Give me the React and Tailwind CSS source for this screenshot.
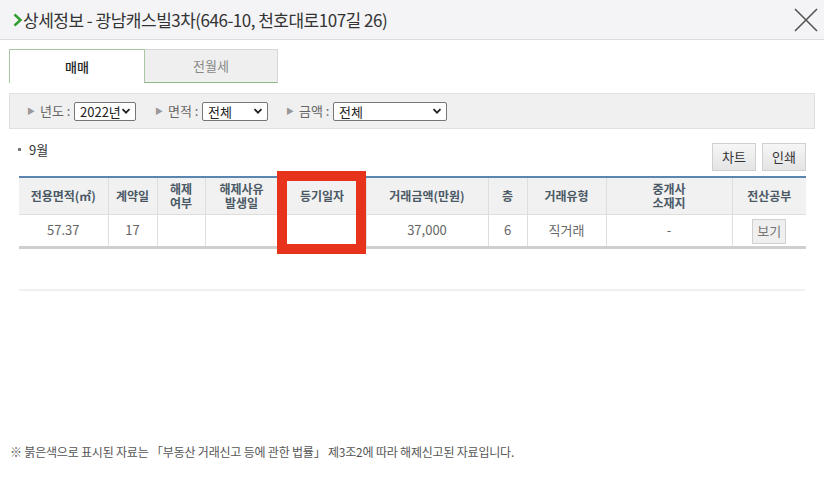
import React from "react";

const font = { fontFamily: '"Noto Sans CJK KR", "Noto Sans", sans-serif' };

function Arrow() {
  return <span className="text-[8px] text-[#999] mr-[5px]">▶</span>;
}

function Select({ value, w }) {
  return (
    <span
      className={`inline-flex items-center justify-between h-[19px] border border-[#767676] rounded-[2px] bg-white pl-[5px] pr-1 text-[13px] text-[#222] ${w}`}
    >
      <span className="leading-none">{value}</span>
      <svg width="10" height="10" viewBox="0 0 10 10" className="text-[#222]">
        <path d="M1.5 3.2 L5 6.7 L8.5 3.2" fill="none" stroke="currentColor" strokeWidth="1.8" />
      </svg>
    </span>
  );
}

const heads = [
  { t: "전용면적(㎡)", w: "w-[89px]" },
  { t: "계약일", w: "w-[49px]" },
  { t: ["해제", "여부"], w: "w-[48px]" },
  { t: ["해제사유", "발생일"], w: "w-[73px]" },
  { t: "등기일자", w: "w-[88px]" },
  { t: "거래금액(만원)", w: "w-[122px]" },
  { t: "층", w: "w-[39px]" },
  { t: "거래유형", w: "w-[79px]" },
  { t: ["중개사", "소재지"], w: "w-[126px]" },
  { t: "전산공부", w: "w-[74px]" },
];

const row = ["57.37", "17", "", "", "", "37,000", "6", "직거래", "-"];

export default function App() {
  return (
    <div className="w-[824px] h-[499px] bg-white relative overflow-hidden" style={font}>
      {/* header */}
      <div className="h-[40px] bg-[#f4f4f6] border-b border-[#dcdcdc] flex items-center pl-[13px] pr-[4px]">
        <svg width="10" height="14" viewBox="0 0 10 14" className="mt-[1px]">
          <path d="M1.5 1.5 L7.5 7 L1.5 12.5" fill="none" stroke="#2e9e2e" strokeWidth="2.4" />
        </svg>
        <h1 className="text-[17px] text-[#333] tracking-[-0.5px]">상세정보 - 광남캐스빌3차(646-10, 천호대로107길 26)</h1>
        <svg width="26" height="26" viewBox="0 0 26 26" className="ml-auto mr-[1px]">
          <path d="M2 2 L24 24 M24 2 L2 24" stroke="#555" strokeWidth="1.6" />
        </svg>
      </div>

      {/* tabs */}
      <div className="flex pl-[9px] pt-[9px]">
        <div className="w-[135px] h-[34px] border-l border-t border-[#a9c7a3] bg-white flex items-center justify-center text-[13px] text-[#222] font-medium">
          매매
        </div>
        <div className="w-[134px] h-[34px] border border-[#d6d6d6] border-l-[#a9c7a3] border-b-[#8dbb85] bg-[#efefef] flex items-center justify-center text-[13px] text-[#888]">
          전월세
        </div>
      </div>

      {/* filter bar */}
      <div className="mx-[9px] mt-[10px] h-[36px] bg-[#f0f0f0] border border-[#e0e0e0] flex items-center pl-[17px] text-[13px] text-[#666]">
        <Arrow />
        <span className="w-[34px]">년도 :</span>
        <Select value="2022년" w="w-[62px]" />
        <span className="w-[19px]" />
        <Arrow />
        <span className="w-[34px]">면적 :</span>
        <Select value="전체" w="w-[66px]" />
        <span className="w-[18px]" />
        <Arrow />
        <span className="w-[34px]">금액 :</span>
        <Select value="전체" w="w-[114px]" />
      </div>

      {/* month + buttons */}
      <div className="flex items-start justify-between pl-[18px] pr-[18px] mt-[14px]">
        <div className="text-[13px] text-[#333] -mt-[3px] flex items-center">
          <span className="w-[3px] h-[3px] bg-[#777] mr-[8px]" />9월
        </div>
        <div className="flex gap-[6px]">
          <button className="w-[44px] h-[28px] border border-[#d0d0d0] bg-gradient-to-b from-[#f6f6f6] to-[#e4e4e4] text-[13px] text-[#333]">
            차트
          </button>
          <button className="w-[44px] h-[28px] border border-[#d0d0d0] bg-gradient-to-b from-[#f6f6f6] to-[#e4e4e4] text-[13px] text-[#333]">
            인쇄
          </button>
        </div>
      </div>

      {/* table */}
      <div className="relative mx-[19px] mt-[5px] w-[787px]">
        <table className="table-fixed w-[787px] border-collapse border-t-2 border-t-[#5a86b0] border-b-[3px] border-b-[#cfcfcf]">
          <thead>
            <tr className="h-[37px] bg-[#f1f1f1]">
              {heads.map((h, i) => (
                <th
                  key={i}
                  className={`${h.w} border-l border-[#dedede] first:border-l-0 text-[12px] font-bold text-[#4b5966] leading-[14px] p-0`}
                >
                  {Array.isArray(h.t) ? (
                    <div className="flex flex-col items-center">
                      <span>{h.t[0]}</span>
                      <span>{h.t[1]}</span>
                    </div>
                  ) : (
                    h.t
                  )}
                </th>
              ))}
            </tr>
          </thead>
          <tbody>
            <tr className="h-[33px] border-t border-[#dedede]">
              {row.map((c, i) => (
                <td
                  key={i}
                  className="border-l border-[#dedede] first:border-l-0 text-center text-[13px] text-[#666] p-0"
                >
                  {c}
                </td>
              ))}
              <td className="border-l border-[#dedede] text-center p-0">
                <button className="w-[34px] h-[25px] border border-[#d0d0d0] bg-[#efefef] text-[13px] text-[#777] align-middle">
                  보기
                </button>
              </td>
            </tr>
          </tbody>
        </table>
        {/* highlight box */}
        <div className="absolute left-[258px] top-[-5px] w-[89px] h-[83px] border-[10px] border-[#e7321c]" />
      </div>

      <div className="mx-[19px] mt-[40px] h-[2px] bg-[#f0f0f0]" />

      <p className="absolute left-[10px] top-[443px] text-[12px] text-[#555] tracking-[-0.2px]">
        ※ 붉은색으로 표시된 자료는 「부동산 거래신고 등에 관한 법률」 제3조2에 따라 해제신고된 자료입니다.
      </p>
    </div>
  );
}
